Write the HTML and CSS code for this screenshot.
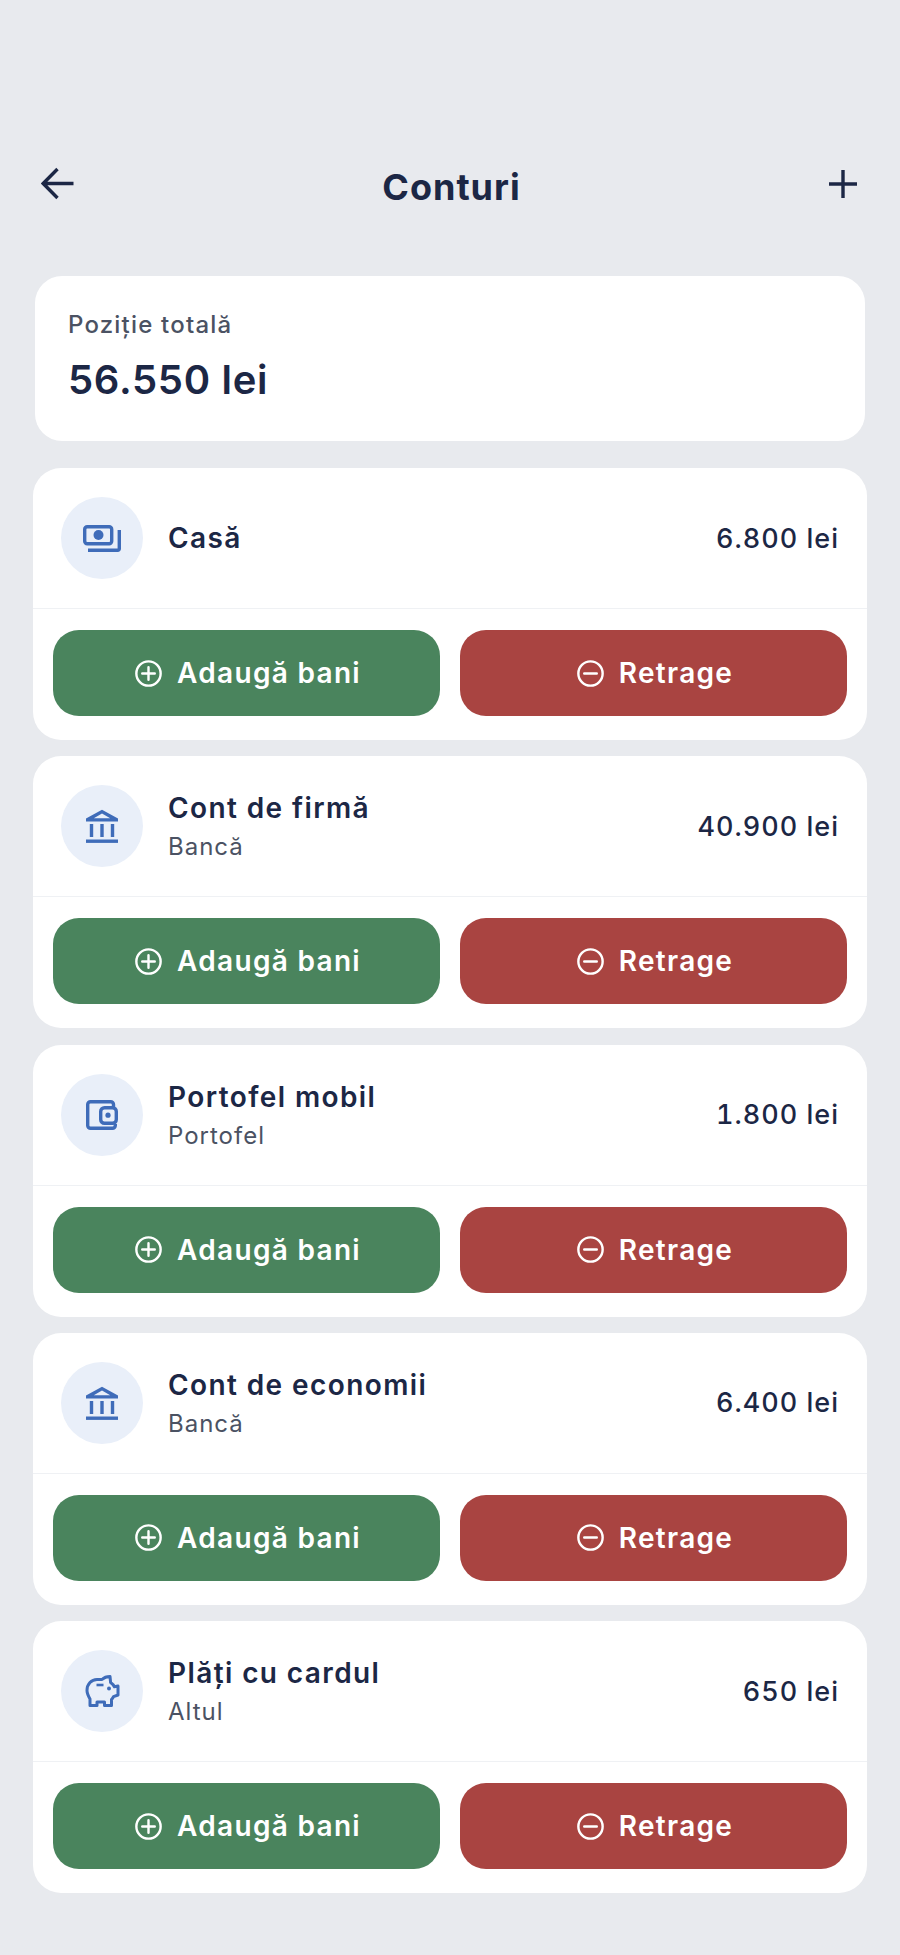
FILE: index.html
```html
<!DOCTYPE html>
<html lang="ro">
<head>
    <meta charset="UTF-8">
    <meta name="viewport" content="width=device-width, initial-scale=1.0">
    <title>Conturi</title>
    <link rel="stylesheet" href="styles.css">
</head>
<body>
    <svg class="sprite" width="0" height="0">
        <symbol id="plus-circle" viewBox="0 0 28 28">
            <circle cx="14" cy="14" r="12.6" fill="none" stroke="currentColor" stroke-width="2.5"/>
            <path d="M14 7.5v13M7.5 14h13" fill="none" stroke="currentColor" stroke-width="2.5" stroke-linecap="round"/>
        </symbol>
        <symbol id="minus-circle" viewBox="0 0 28 28">
            <circle cx="14" cy="14" r="12.6" fill="none" stroke="currentColor" stroke-width="2.5"/>
            <path d="M7.5 14h13" fill="none" stroke="currentColor" stroke-width="2.5" stroke-linecap="round"/>
        </symbol>
        <symbol id="bank" viewBox="0 0 34 34">
            <path d="M17 .8 33 9.6V12.4H1V9.6zM17 4.6 8.8 9.2h16.4z" fill="currentColor" fill-rule="evenodd"/>
            <path d="M6.5 15v13M17 15v13M27.5 15v13" fill="none" stroke="currentColor" stroke-width="3.4"/>
            <path d="M1 32.2h32" fill="none" stroke="currentColor" stroke-width="3.4"/>
        </symbol>
    </svg>

    <div class="page">
        <header class="topbar">
            <svg class="topbar-icon" width="34" height="34" viewBox="0 0 34 34">
                <path d="M32.5 16.5H3M16.5 2 2.2 16.5 16.5 31" fill="none" stroke="#1c2745" stroke-width="3.4"/>
            </svg>
            <h1>Conturi</h1>
            <svg class="topbar-icon" width="30" height="30" viewBox="0 0 30 30">
                <path d="M15 1v28M1 15h28" fill="none" stroke="#1c2745" stroke-width="3.4"/>
            </svg>
        </header>

        <section class="total-card">
            <div class="total-label">Poziție totală</div>
            <div class="total-value">56.550 lei</div>
        </section>

        <section class="account">
            <div class="account-row">
                <div class="account-icon">
                    <svg width="38" height="27" viewBox="0 0 38 27">
                        <rect x="1.7" y="1.7" width="27" height="17" rx="2.5" fill="none" stroke="currentColor" stroke-width="3.4"/>
                        <circle cx="15.5" cy="10" r="5" fill="currentColor"/>
                        <path d="M36.3 5v18.8a1.5 1.5 0 0 1-1.5 1.5H5" fill="none" stroke="currentColor" stroke-width="3.4"/>
                    </svg>
                </div>
                <div class="account-name">
                    <div class="name">Casă</div>
                </div>
                <div class="account-sum">6.800 lei</div>
            </div>
            <div class="account-actions">
                <button class="btn btn-add"><svg width="27" height="27"><use href="#plus-circle"/></svg>Adaugă bani</button>
                <button class="btn btn-take"><svg width="27" height="27"><use href="#minus-circle"/></svg>Retrage</button>
            </div>
        </section>

        <section class="account">
            <div class="account-row">
                <div class="account-icon">
                    <svg width="34" height="34"><use href="#bank"/></svg>
                </div>
                <div class="account-name">
                    <div class="name">Cont de firmă</div>
                    <div class="kind">Bancă</div>
                </div>
                <div class="account-sum">40.900 lei</div>
            </div>
            <div class="account-actions">
                <button class="btn btn-add"><svg width="27" height="27"><use href="#plus-circle"/></svg>Adaugă bani</button>
                <button class="btn btn-take"><svg width="27" height="27"><use href="#minus-circle"/></svg>Retrage</button>
            </div>
        </section>

        <section class="account">
            <div class="account-row">
                <div class="account-icon">
                    <svg width="32" height="30" viewBox="0 0 32 30">
                        <path d="M27.5 7V4.5a2.8 2.8 0 0 0-2.8-2.8H4.5a2.8 2.8 0 0 0-2.8 2.8v21a2.8 2.8 0 0 0 2.8 2.8h22a2.8 2.8 0 0 0 2.8-2.8V24" fill="none" stroke="currentColor" stroke-width="3.4"/>
                        <rect x="14.7" y="7.7" width="15.6" height="15.6" rx="3.8" fill="none" stroke="currentColor" stroke-width="3.4"/>
                        <circle cx="22" cy="15.2" r="2.6" fill="currentColor"/>
                    </svg>
                </div>
                <div class="account-name">
                    <div class="name">Portofel mobil</div>
                    <div class="kind">Portofel</div>
                </div>
                <div class="account-sum">1.800 lei</div>
            </div>
            <div class="account-actions">
                <button class="btn btn-add"><svg width="27" height="27"><use href="#plus-circle"/></svg>Adaugă bani</button>
                <button class="btn btn-take"><svg width="27" height="27"><use href="#minus-circle"/></svg>Retrage</button>
            </div>
        </section>

        <section class="account">
            <div class="account-row">
                <div class="account-icon">
                    <svg width="34" height="34"><use href="#bank"/></svg>
                </div>
                <div class="account-name">
                    <div class="name">Cont de economii</div>
                    <div class="kind">Bancă</div>
                </div>
                <div class="account-sum">6.400 lei</div>
            </div>
            <div class="account-actions">
                <button class="btn btn-add"><svg width="27" height="27"><use href="#plus-circle"/></svg>Adaugă bani</button>
                <button class="btn btn-take"><svg width="27" height="27"><use href="#minus-circle"/></svg>Retrage</button>
            </div>
        </section>

        <section class="account">
            <div class="account-row">
                <div class="account-icon">
                    <svg width="35" height="33" viewBox="0 0 35 33">
                        <path d="M2 15.5C2 9 6.500 4.500 12 4.500h5c2-2 5-3 8-3l.6 6c1.700 1.200 3 2.600 3.800 4.300l3.600-.8v9l-4.500 1.600c-.6 1.300-1.300 2.200-2 3v6h-7v-3.600H12v3.600H5v-6.500C3 20.500 2 18.500 2 15.500z" fill="none" stroke="currentColor" stroke-width="3" stroke-linejoin="round"/>
                        <path d="M11.500 10h7" fill="none" stroke="currentColor" stroke-width="2.600"/>
                        <circle cx="24" cy="13.500" r="2" fill="currentColor"/>
                    </svg>
                </div>
                <div class="account-name">
                    <div class="name">Plăți cu cardul</div>
                    <div class="kind">Altul</div>
                </div>
                <div class="account-sum">650 lei</div>
            </div>
            <div class="account-actions">
                <button class="btn btn-add"><svg width="27" height="27"><use href="#plus-circle"/></svg>Adaugă bani</button>
                <button class="btn btn-take"><svg width="27" height="27"><use href="#minus-circle"/></svg>Retrage</button>
            </div>
        </section>
    </div>
</body>
</html>
```

FILE: styles.css
```css
html, body {
    margin: 0;
    padding: 0;
}
body {
    background: #e8eaee;
    color: #1c2745;
    font-family: "Inter", "Liberation Sans", sans-serif;
    min-height: 1955px;
}
.sprite {
    display: block;
    height: 0;
}
.page {
    padding: 160px 33px 0;
}

/* top bar */
.topbar {
    display: flex;
    justify-content: space-between;
    align-items: center;
    height: 48px;
    padding: 0 9px 0 8px;
    margin-bottom: 68px;
}
.topbar h1 {
    margin: 6px 0 0;
    font-size: 36px;
    font-weight: 700;
    letter-spacing: 1px;
}

/* total */
.total-card {
    background: #fff;
    border-radius: 27px;
    margin: 0 2px 27px;
    height: 165px;
    padding: 35px 33px 0;
    box-sizing: border-box;
}
.total-label {
    font-size: 24px;
    font-weight: 500;
    color: #4b5263;
    letter-spacing: 1.2px;
    line-height: 28px;
}
.total-value {
    font-size: 40px;
    font-weight: 600;
    letter-spacing: 0.7px;
    line-height: 50px;
    margin-top: 16px;
}

/* accounts */
.account {
    background: #fff;
    border-radius: 28px;
    height: 272px;
    margin-bottom: 16.3px;
    box-sizing: border-box;
}
.account-row {
    display: flex;
    align-items: center;
    height: 141px;
    padding: 0 28px;
    border-bottom: 1px solid #eff1f4;
    box-sizing: border-box;
}
.account-icon {
    width: 82px;
    height: 82px;
    border-radius: 50%;
    background: #e9eff9;
    color: #3f6cb9;
    display: flex;
    align-items: center;
    justify-content: center;
    flex-shrink: 0;
    margin-right: 25px;
}
.account-name {
    flex: 1;
}
.name {
    font-size: 28px;
    font-weight: 600;
    letter-spacing: 1.4px;
    line-height: 34px;
}
.kind {
    font-size: 24px;
    color: #4b5263;
    letter-spacing: 1px;
    line-height: 28px;
    margin-top: 8px;
}
.account-sum {
    font-size: 27px;
    font-weight: 500;
    letter-spacing: 1px;
    font-variant-numeric: tabular-nums;
}
.account-actions {
    display: flex;
    gap: 20px;
    padding: 21px 20px 0;
}
.btn {
    flex: 1;
    height: 86px;
    border: none;
    border-radius: 26px;
    padding: 0 0 0 3px;
    color: #fff;
    font-family: inherit;
    font-size: 28px;
    font-weight: 600;
    letter-spacing: 1.3px;
    display: flex;
    align-items: center;
    justify-content: center;
    gap: 15px;
    cursor: pointer;
}
.btn-add {
    background: #4a845d;
}
.btn-take {
    background: #a94441;
}
```
